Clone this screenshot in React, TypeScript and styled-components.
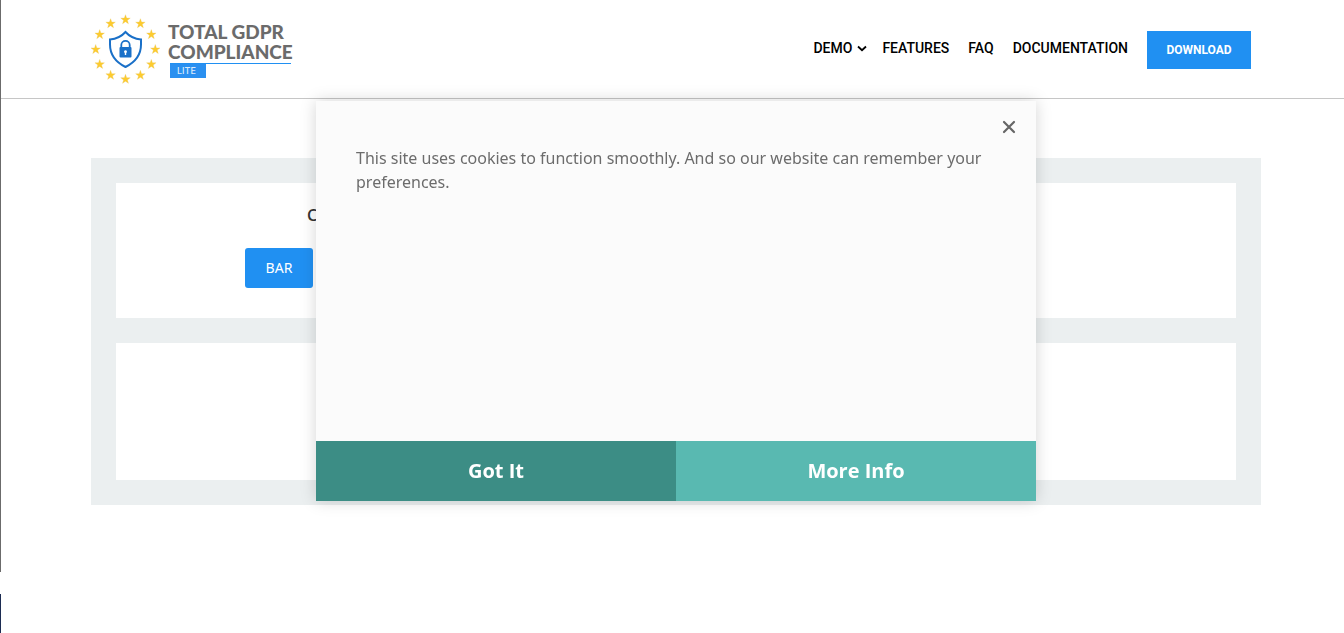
import React from 'react';
import styled, { createGlobalStyle } from 'styled-components';

const GlobalStyle = createGlobalStyle`
  * { box-sizing: border-box; }
  body { margin: 0; background: #fff; font-family: "Open Sans", "Noto Sans", sans-serif; }
`;

const Shell = styled.div`
  display: grid;
  grid-template-columns: 1px minmax(0, 1fr);
  min-height: 100vh;
`;

const Edge = styled.div`
  background: linear-gradient(#6b6b6b 572px, #fff 572px, #fff 594px, #1c2c52 594px);
`;

const Container = styled.div`
  width: 1170px;
  max-width: 100%;
  margin: 0 auto;
`;

const Header = styled.header`
  padding-left: 7px;
  border-bottom: 1px solid #c6c6c6;
`;

const HeaderRow = styled(Container)`
  display: flex;
  justify-content: space-between;
  height: 98px;
`;

const Brand = styled.a`
  display: flex;
  gap: 8px;
  padding-top: 14px;
  text-decoration: none;
`;

const BrandText = styled.span`
  display: flex;
  flex-direction: column;
  align-items: flex-start;
  padding-top: 8px;
`;

const BrandName = styled.span`
  width: 128px;
  height: 40px;
  color: #6b6b6b;
  font: 900 19px/20px Lato, sans-serif;
`;

const BrandTag = styled.span`
  width: 121px;
  margin: 1px 0 0 2px;
  border-top: 1px solid #2090f2;
`;

const Lite = styled.span`
  display: block;
  width: 36px;
  height: 14px;
  padding-left: 7px;
  background: #2b90f0;
  color: #dcecfb;
  font: 500 9px/14px Inter, sans-serif;
`;

const Nav = styled.nav`
  display: flex;
  align-items: flex-start;
  gap: 19px;
  padding: 31px 10px 0 0;
`;

const NavLink = styled.a<{ $menu?: boolean }>`
  display: flex;
  align-items: center;
  gap: 5px;
  height: 34px;
  margin-right: ${(p) => (p.$menu ? '-4px' : '0')};
  color: #000;
  font: 500 14px/34px Roboto, sans-serif;
  text-decoration: none;
`;

const Download = styled.a`
  display: block;
  width: 104px;
  height: 38px;
  background: #2090f2;
  color: #fff;
  font: 700 12px/38px Roboto, sans-serif;
  text-align: center;
  text-decoration: none;
`;

const Main = styled.main`
  padding: 59px 0 0 7px;
`;

const Panel = styled(Container)`
  display: grid;
  gap: 25px;
  padding: 25px;
  background: #ebeff0;
`;

const Card = styled.section`
  min-height: 135px;
  padding: 20px 129px 30px;
  background: #fff;

  & + & { min-height: 137px; }
`;

const CardTitle = styled.h2`
  margin: 0 0 21px;
  padding-left: 62px;
  color: #333;
  font: 600 16px/24px "Open Sans", sans-serif;
`;

const BarButton = styled.button`
  width: 68px;
  height: 40px;
  padding: 0;
  border: 0;
  border-radius: 3px;
  background: #2090f2;
  color: #fff;
  font: 400 14px/40px "Noto Sans", sans-serif;
`;

const Overlay = styled.div`
  position: fixed;
  inset: 101px 0 auto 8px;
  display: flex;
  justify-content: center;
`;

const Dialog = styled.div`
  display: flex;
  flex-direction: column;
  width: 720px;
  max-width: 100%;
  min-height: 400px;
  background: #fbfbfb;
  box-shadow: 0 0 15px rgba(0, 0, 0, 0.17);
`;

const DialogBody = styled.div`
  display: flex;
  flex-direction: column;
  flex: 1;
  padding: 16px 20px 40px 40px;
`;

const Close = styled.button`
  align-self: flex-end;
  display: flex;
  width: 14px;
  height: 20px;
  padding: 3px 0 0;
  border: 0;
  background: none;
  color: #666;
`;

const Message = styled.p`
  margin: 9px 0 0;
  color: #6c6c6c;
  font: 400 16px/24px "Noto Sans", sans-serif;
`;

const Actions = styled.div`
  display: grid;
  grid-template-columns: 1fr 1fr;
`;

const Action = styled.button<{ $dark?: boolean }>`
  height: 60px;
  padding: 0;
  border: 0;
  background: ${(p) => (p.$dark ? '#3c8d85' : '#59b9b1')};
  color: #fff;
  font: 700 20px/60px "Open Sans", sans-serif;
`;

const starPoints = Array.from({ length: 10 }, (_, i) => {
  const r = i % 2 ? 2 : 5;
  const a = (i * Math.PI) / 5;
  return `${Math.sin(a) * r},${-Math.cos(a) * r}`;
}).join(' ');

function Emblem() {
  return (
    <svg width="69" height="70" viewBox="0 0 69 70" aria-hidden="true">
      {Array.from({ length: 12 }, (_, i) => {
        const a = (i * Math.PI) / 6;
        return (
          <polygon
            key={i}
            points={starPoints}
            fill="#fdcb2e"
            stroke="#e6c65c"
            strokeWidth=".3"
            transform={`translate(${34.5 + Math.sin(a) * 29.8} ${35.5 - Math.cos(a) * 29.8})`}
          />
        );
      })}
      <path
        d="M34.5 18c-4.500 5-10 7-15.500 7.500v5c0 10.500 6.500 18 15.500 22.500 9-4.500 15.500-12 15.500-22.500v-5C44.500 25 39 23 34.500 18z"
        fill="#fff"
        stroke="#1a70c8"
        strokeWidth="2"
      />
      <path d="M30.300 34v-3a4.200 4.200 0 0 1 8.400 0v3" fill="none" stroke="#1a70c8" strokeWidth="1.800" />
      <rect x="28.500" y="33" width="12" height="10.500" rx="1" fill="#1a70c8" />
      <path d="M34.500 36.200a1.500 1.500 0 0 1 .7 2.800v2h-1.400v-2a1.500 1.500 0 0 1 .7-2.800z" fill="#fff" />
    </svg>
  );
}

export default function App() {
  return (
    <Shell>
      <GlobalStyle />
      <Edge />
      <div>
        <Header>
          <HeaderRow>
            <Brand href="#">
              <Emblem />
              <BrandText>
                <BrandName>TOTAL GDPR COMPLIANCE</BrandName>
                <BrandTag><Lite>LITE</Lite></BrandTag>
              </BrandText>
            </Brand>
            <Nav>
              <NavLink href="#" $menu>
                DEMO
                <svg width="10" height="8" viewBox="0 0 10 8" aria-hidden="true">
                  <path d="M1 2.500 5 6.200 9 2.500" fill="none" stroke="#000" strokeWidth="1.800" />
                </svg>
              </NavLink>
              <NavLink href="#">FEATURES</NavLink>
              <NavLink href="#">FAQ</NavLink>
              <NavLink href="#">DOCUMENTATION</NavLink>
              <Download href="#">DOWNLOAD</Download>
            </Nav>
          </HeaderRow>
        </Header>
        <Main>
          <Panel>
            <Card>
              <CardTitle>C</CardTitle>
              <BarButton type="button">BAR</BarButton>
            </Card>
            <Card />
          </Panel>
        </Main>
      </div>
      <Overlay>
        <Dialog role="dialog">
          <DialogBody>
            <Close type="button" aria-label="Close">
              <svg width="14" height="14" viewBox="0 0 14 14" aria-hidden="true">
                <path d="M2 2 12 12M12 2 2 12" stroke="currentColor" strokeWidth="2.200" strokeLinecap="round" />
              </svg>
            </Close>
            <Message>
              This site uses cookies to function smoothly. And so our website can remember your preferences.
            </Message>
          </DialogBody>
          <Actions>
            <Action type="button" $dark>Got It</Action>
            <Action type="button">More Info</Action>
          </Actions>
        </Dialog>
      </Overlay>
    </Shell>
  );
}
